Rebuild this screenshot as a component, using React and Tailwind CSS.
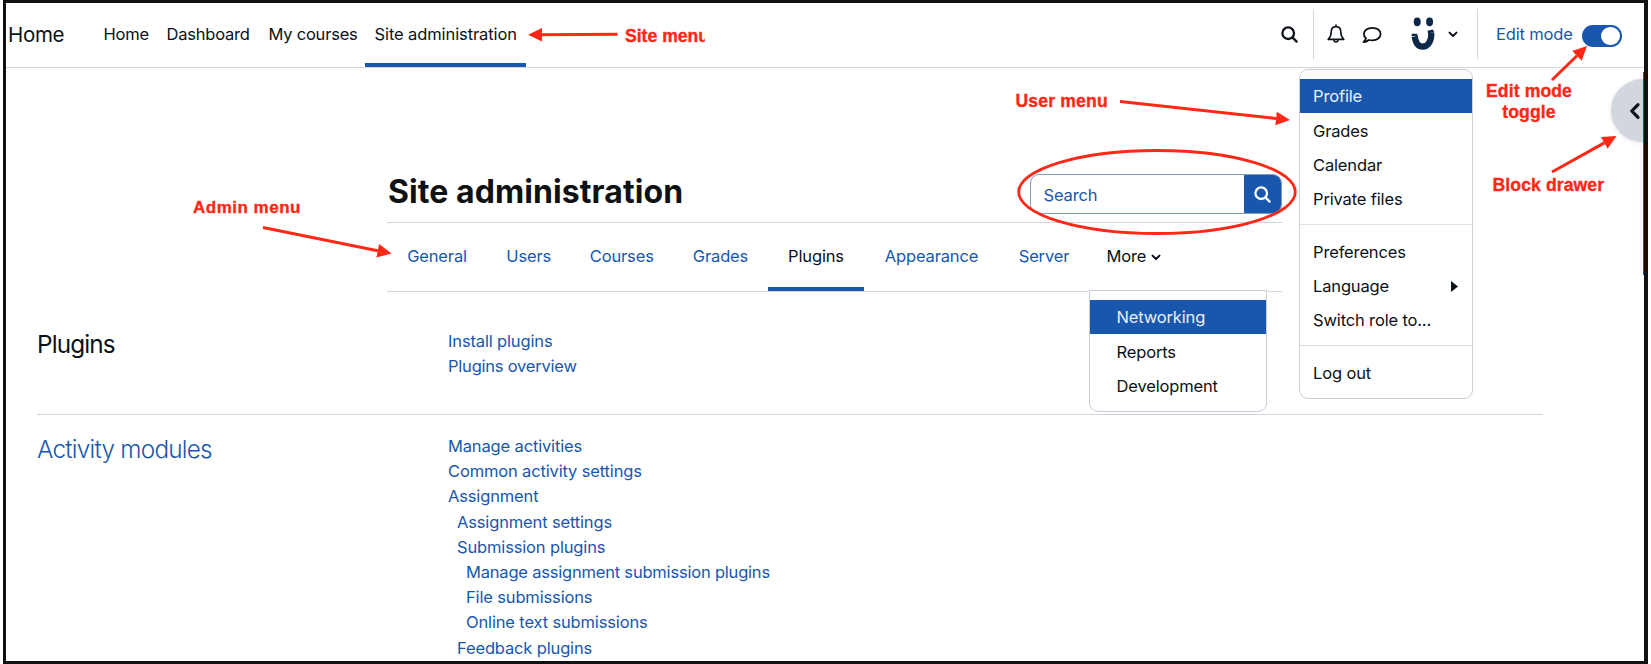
import React from "react";

const NAV = [
  { label: "Home", cls: "w-[63px]" },
  { label: "Dashboard", cls: "w-[102px]" },
  { label: "My courses", cls: "w-[106px]" },
];

const TABS = [
  { label: "General", cls: "w-[100px]" },
  { label: "Users", cls: "w-[83.5px]" },
  { label: "Courses", cls: "w-[102.5px]" },
  { label: "Grades", cls: "w-[95px]" },
  { label: "Plugins", cls: "w-[96px]", active: true },
  { label: "Appearance", cls: "w-[135px]" },
  { label: "Server", cls: "w-[90px]" },
];

const LINKS = [
  ["Manage activities", ""],
  ["Common activity settings", ""],
  ["Assignment", ""],
  ["Assignment settings", "pl-[9px]"],
  ["Submission plugins", "pl-[9px]"],
  ["Manage assignment submission plugins", "pl-[18px] tracking-[-0.2px]"],
  ["File submissions", "pl-[18px]"],
  ["Online text submissions", "pl-[18px]"],
  ["Feedback plugins", "pl-[9px]"],
];

function SearchIcon({ className }) {
  return (
    <svg viewBox="0 0 17 17" className={className} fill="none" stroke="currentColor" strokeWidth="2.3" strokeLinecap="round">
      <circle cx="7.2" cy="7.2" r="5.8" />
      <path d="M11.6 11.6 L15.6 15.6" />
    </svg>
  );
}

function Chevron({ className }) {
  return (
    <svg viewBox="0 0 10 7" className={className} fill="none" stroke="currentColor" strokeWidth="2" strokeLinecap="round" strokeLinejoin="round">
      <path d="M1.5 1.6 L5 5 L8.5 1.6" />
    </svg>
  );
}

function Header() {
  return (
    <header className="flex h-[65px] shrink-0 border-b border-[#d3d6da] text-[#0b1118]">
      <div className="flex w-[85px] items-center pb-[1px] pl-[2px] text-[20.5px] tracking-[-0.3px]">Home</div>
      <nav className="flex pl-[12.5px]">
        {NAV.map((n) => (
          <div key={n.label} className={`flex items-center pb-[1px] tracking-[-0.22px] ${n.cls}`}>{n.label}</div>
        ))}
        <div className="-ml-[9.5px] flex h-[64px] w-[161px] items-center border-b-4 border-[#1857ab] pl-[9.5px] pt-[3px] tracking-[-0.1px]">Site administration</div>
      </nav>
      <div className="ml-auto flex h-[64px] items-center pb-[2px]">
        <SearchIcon className="mr-[15px] h-[17px] w-[17px]" />
        <div className="h-[50px] w-px bg-[#d3d6da]" />
        <svg viewBox="0 0 18 20" className="ml-[13px] h-[20px] w-[18px]" fill="none" stroke="currentColor" strokeWidth="1.6" strokeLinejoin="round" strokeLinecap="round">
          <path d="M9 1 V2.6 M9 2.6 C5.6 2.6 4.2 5.2 4.2 8 C4.2 11.6 3 13.6 1.2 15.4 H16.8 C15 13.6 13.8 11.6 13.8 8 C13.8 5.2 12.4 2.6 9 2.6 Z" />
          <path d="M7 16 C7.2 18.6 10.8 18.6 11 16" />
        </svg>
        <svg viewBox="0 0 20 18" className="ml-[17px] mt-[1px] h-[18px] w-[20px]" fill="none" stroke="currentColor" strokeWidth="1.8" strokeLinejoin="round">
          <path d="M10.4 1.8 C5.6 1.8 1.9 4.4 1.9 8 C1.9 9.7 2.7 11.2 4 12.3 C3.7 13.8 2.6 15 1.6 16 C3.6 16 5.5 15.2 6.9 14 C8 14.3 9.2 14.4 10.4 14.4 C15.2 14.4 18.6 11.6 18.6 8 C18.6 4.4 15.2 1.8 10.4 1.8 Z" />
        </svg>
        <svg viewBox="0 0 26 34" className="ml-[28.5px] h-[34px] w-[26px]">
          <ellipse cx="7.2" cy="4.8" rx="3.5" ry="4.4" fill="#0d2748" />
          <ellipse cx="19.6" cy="4.8" rx="3.5" ry="4.4" fill="#0d2748" />
          <path d="M4.7 19.5 C5.6 25.5 8 29.6 12.6 29.6 C18.8 29.6 21.9 22.5 21.2 15.6" fill="none" stroke="#0d2748" strokeWidth="6.2" />
          <path d="M1.5 19 L2 16.8 L7 16.8 L8 19.6 Z M18 16.4 L17.6 13.8 L22.6 12.6 L24.3 15 Z" fill="#0d2748" />
        </svg>
        <Chevron className="ml-[12px] h-[7px] w-[10px]" />
        <div className="ml-[18.5px] h-[50px] w-px bg-[#d3d6da]" />
        <div className="ml-[18.5px] mt-[2px] w-[86px] text-[#1857ab]">Edit mode</div>
        <div className="mr-[22.5px] mt-[4px] flex h-[22.5px] w-[39.5px] items-center justify-end rounded-full bg-[#1857ab] pr-[2px]">
          <div className="h-[18.5px] w-[18.5px] rounded-full bg-white" />
        </div>
      </div>
    </header>
  );
}

function MenuItem({ children, active, className = "" }) {
  return (
    <div className={`flex h-[34.2px] items-center pt-[2px] ${active ? "bg-[#1857ab] text-[#e9eff8]" : "text-[#0b1118]"} ${className}`}>
      {children}
    </div>
  );
}

function UserMenu() {
  return (
    <div className="absolute left-[1299px] top-[69px] h-[330px] w-[174px] rounded-[9px] border-[1.5px] border-[#c9ced8] bg-white pt-[9px]">
      <MenuItem active className="pl-[13px]">Profile</MenuItem>
      <MenuItem className="pl-[13px]">Grades</MenuItem>
      <MenuItem className="pl-[13px]">Calendar</MenuItem>
      <MenuItem className="pl-[13px]">Private files</MenuItem>
      <div className="mb-[9.5px] mt-[8px] h-px bg-[#dfe1e5]" />
      <MenuItem className="pl-[13px]">Preferences</MenuItem>
      <MenuItem className="justify-between pl-[13px] pr-[14px]">
        Language
        <svg viewBox="0 0 7 11" className="h-[11px] w-[7px]" fill="currentColor"><path d="M0 0 L7 5.5 L0 11 Z" /></svg>
      </MenuItem>
      <MenuItem className="pl-[13px]">Switch role to...</MenuItem>
      <div className="mb-[9px] mt-[8.5px] h-px bg-[#d6d9de]" />
      <MenuItem className="pl-[13px]">Log out</MenuItem>
    </div>
  );
}

function MoreMenu() {
  return (
    <div className="absolute left-[1089px] top-[290px] h-[122px] w-[178px] rounded-b-[9px] border border-[#c9ced8] bg-white pt-[8.5px]">
      <MenuItem active className="pl-[26.5px] pt-[3px]">Networking</MenuItem>
      <MenuItem className="pl-[26.5px] pt-[4px]">Reports</MenuItem>
      <MenuItem className="pl-[26.5px] pt-[4px]">Development</MenuItem>
    </div>
  );
}

function Arrow({ x1, y1, x2, y2 }) {
  const a = Math.atan2(y2 - y1, x2 - x1);
  const bx = x2 - 14 * Math.cos(a);
  const by = y2 - 14 * Math.sin(a);
  const px = 6.8 * Math.sin(a);
  const py = 6.8 * Math.cos(a);
  return (
    <g>
      <line x1={x1} y1={y1} x2={bx} y2={by} stroke="#ff2716" strokeWidth="3" />
      <polygon points={`${x2},${y2} ${bx + px},${by - py} ${bx - px},${by + py}`} fill="#ff2716" />
    </g>
  );
}

function Annotations() {
  return (
    <div className="pointer-events-none absolute inset-0 whitespace-nowrap font-['Liberation_Sans',Arial,sans-serif] text-[17.6px] font-bold leading-[21px] tracking-normal text-[#ff2716] [-webkit-text-stroke:0.35px_#ff2716]">
      <svg viewBox="0 0 1651 664" className="absolute inset-0 h-[664px] w-[1651px]">
        <ellipse cx="1157" cy="192" rx="138.3" ry="41.5" fill="none" stroke="#ff2716" strokeWidth="2.8" />
        <Arrow x1={617.5} y1={34.3} x2={528} y2={34.8} />
        <Arrow x1={263} y1={227.5} x2={391.5} y2={253.5} />
        <Arrow x1={1120} y1={101.5} x2={1290} y2={120} />
        <Arrow x1={1552} y1={80} x2={1587} y2={46} />
        <Arrow x1={1552} y1={172} x2={1616.5} y2={136} />
      </svg>
      <span className="absolute left-[625px] top-[25.5px]">Site menu</span>
      <span className="absolute left-[704.5px] top-[28px] h-[18px] w-[7px] bg-white" />
      <span className="absolute left-[193px] top-[197px] text-[17px] tracking-[0.5px]">Admin menu</span>
      <span className="absolute left-[1015.5px] top-[90.5px] tracking-[0.15px]">User menu</span>
      <span className="absolute left-[1485px] top-[80.5px] w-[88px] text-center tracking-[0.1px]">Edit mode<br />toggle</span>
      <span className="absolute left-[1492.5px] top-[174.5px] tracking-[0.1px]">Block drawer</span>
    </div>
  );
}

export default function App() {
  return (
    <div className="relative h-[664px] w-[1651px] overflow-hidden bg-white font-['Inter',sans-serif] text-[16.5px] leading-[25.2px] tracking-[-0.15px] whitespace-nowrap">
      <div className="ml-[3px] flex h-[664px] w-[1645px] flex-col overflow-hidden border-[3px] border-r-4 border-[#101113]">
        <Header />
        <div className="ml-[381px] w-[895px]">
          <div className="flex h-[155px] items-end justify-between border-b border-[#d3d6da] pb-[8px]">
            <h1 className="pb-[2px] pl-[1px] text-[32px] font-bold leading-[40px] tracking-[0.08px] text-[#101113]">Site administration</h1>
            <div className="flex h-[40px] w-[252.5px] overflow-hidden rounded-[9px] border-[1.5px] border-[#7f9cc2]">
              <div className="flex flex-1 items-center pl-[13px] pt-[3px] text-[#1857ab]">Search</div>
              <div className="flex w-[37.5px] items-center justify-center bg-[#1857ab] pt-[1px] text-white">
                <SearchIcon className="h-[17px] w-[17px]" />
              </div>
            </div>
          </div>
          <div className="flex h-[69px] border-b border-[#d3d6da]">
            {TABS.map((t) => (
              <div
                key={t.label}
                className={`flex h-[68px] items-center justify-center ${t.cls} ${t.active ? "text-[#0b1118] shadow-[inset_0_-4px_0_#1857ab]" : "text-[#1857ab]"}`}
              >
                {t.label}
              </div>
            ))}
            <div className="flex items-center gap-[4.5px] pl-[17.5px] text-[#0b1118]">
              More
              <Chevron className="h-[7px] w-[10px]" />
            </div>
          </div>
        </div>
        <div className="mx-[31px] flex h-[123px] w-[1506px] shrink-0 border-b border-[#d3d6da] pt-[37px]">
          <h2 className="w-[411px] pt-[1px] text-[24.3px] leading-[28px] tracking-[-0.85px] text-[#0b1118]">Plugins</h2>
          <div className="text-[#1857ab]">
            <div>Install plugins</div>
            <div className="tracking-[-0.22px]">Plugins overview</div>
          </div>
        </div>
        <div className="mx-[31px] flex pt-[19px]">
          <h2 className="w-[411px] pt-[1px] text-[24.3px] font-light leading-[28px] tracking-[-0.75px] text-[#1857ab]">Activity modules</h2>
          <div className="text-[#1857ab]">
            {LINKS.map(([t, c]) => (
              <div key={t} className={c}>{t}</div>
            ))}
          </div>
        </div>
      </div>
      <div className="absolute left-[1601px] top-[72px] h-[203px] w-[43px] overflow-hidden border-r-[1.5px] border-[#1857ab]">
        <div className="ml-[10px] mt-[7px] flex h-[63px] w-[63px] items-center rounded-full bg-[#d2d7df] pl-[18px] shadow-[0_1px_4px_rgba(0,0,0,0.12)]">
          <svg viewBox="0 0 12 18" className="h-[18px] w-[12px]" fill="none" stroke="#0b1118" strokeWidth="3.2" strokeLinecap="round" strokeLinejoin="round">
            <path d="M9 2.6 L2.8 9 L9 15.4" />
          </svg>
        </div>
      </div>
      <UserMenu />
      <MoreMenu />
      <Annotations />
    </div>
  );
}
